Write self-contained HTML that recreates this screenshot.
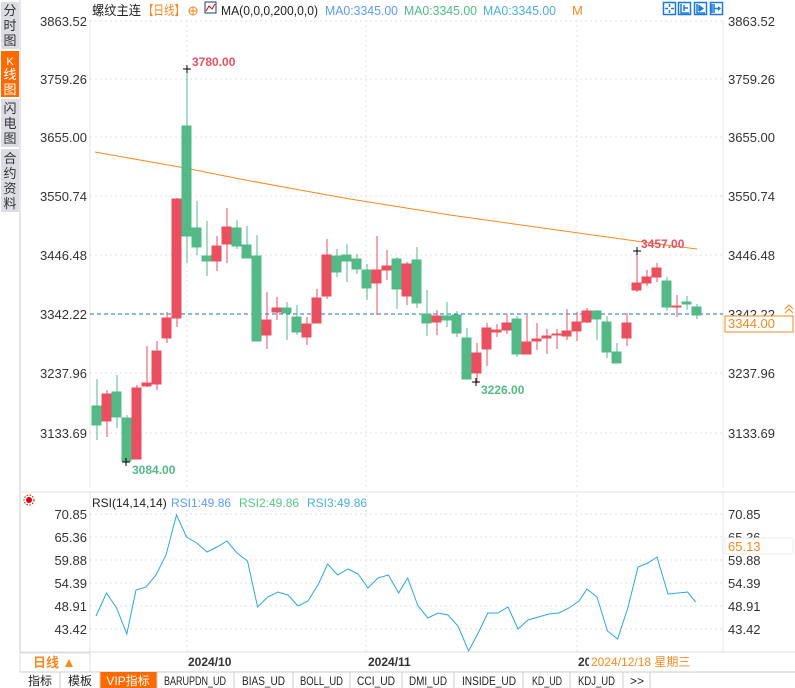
<!DOCTYPE html>
<html><head><meta charset="utf-8"><style>
body{margin:0;width:795px;height:688px;overflow:hidden;background:#fff;font-family:"Liberation Sans","Noto Sans CJK SC",sans-serif;}
svg{display:block}
text{font-family:"Liberation Sans","Noto Sans CJK SC",sans-serif;}
</style></head><body>
<svg width="795" height="688" viewBox="0 0 795 688" xmlns="http://www.w3.org/2000/svg">
<rect x="0" y="0" width="20" height="672" fill="#fff"/>
<rect x="1" y="2" width="18" height="47" fill="#dcdce4"/>
<rect x="1" y="51" width="18" height="46" fill="#ff6a00"/>
<rect x="1" y="99" width="18" height="48" fill="#dcdce4"/>
<rect x="1" y="149" width="18" height="63" fill="#dcdce4"/>
<g font-size="13" fill="#333" text-anchor="middle">
<text x="10" y="15">分</text><text x="10" y="30">时</text><text x="10" y="45">图</text>
<text x="10" y="65" fill="#fff" font-size="11">K</text><text x="10" y="79" fill="#fff">线</text><text x="10" y="94" fill="#fff">图</text>
<text x="10" y="113">闪</text><text x="10" y="128">电</text><text x="10" y="143">图</text>
<text x="10" y="163">合</text><text x="10" y="178">约</text><text x="10" y="193">资</text><text x="10" y="208">料</text>
</g>
<line x1="20" y1="0" x2="20" y2="672" stroke="#ccc"/>
<line x1="90" y1="20" x2="90" y2="488" stroke="#e4e4e4"/>
<line x1="723" y1="20" x2="723" y2="488" stroke="#e4e4e4"/>
<g stroke="#e2e2e2" stroke-dasharray="2,3">
<line x1="90" y1="21" x2="723" y2="21"/><line x1="90" y1="79" x2="723" y2="79"/><line x1="90" y1="137" x2="723" y2="137"/><line x1="90" y1="196" x2="723" y2="196"/><line x1="90" y1="255" x2="723" y2="255"/><line x1="90" y1="373" x2="723" y2="373"/><line x1="90" y1="433" x2="723" y2="433"/>
<line x1="187" y1="20" x2="187" y2="488"/><line x1="366" y1="20" x2="366" y2="488"/><line x1="577" y1="20" x2="577" y2="488"/>
<line x1="187" y1="495" x2="187" y2="652"/><line x1="366" y1="495" x2="366" y2="652"/><line x1="577" y1="495" x2="577" y2="652"/>
<line x1="90" y1="514" x2="723" y2="514"/><line x1="90" y1="537" x2="723" y2="537"/><line x1="90" y1="560" x2="723" y2="560"/><line x1="90" y1="583" x2="723" y2="583"/><line x1="90" y1="606" x2="723" y2="606"/><line x1="90" y1="629" x2="723" y2="629"/>
</g>
<line x1="90" y1="314" x2="723" y2="314" stroke="#1a6fd8" stroke-dasharray="4,3"/>
<g font-size="13" fill="#333">
<g text-anchor="end">
<text x="87" y="26">3863.52</text><text x="87" y="84">3759.26</text><text x="87" y="142">3655.00</text><text x="87" y="201">3550.74</text><text x="87" y="260">3446.48</text><text x="87" y="319">3342.22</text><text x="87" y="378">3237.96</text><text x="87" y="438">3133.69</text>
<text x="87" y="519">70.85</text><text x="87" y="542">65.36</text><text x="87" y="565">59.88</text><text x="87" y="588">54.39</text><text x="87" y="611">48.91</text><text x="87" y="634">43.42</text>
</g>
<text x="728" y="26">3863.52</text><text x="728" y="84">3759.26</text><text x="728" y="142">3655.00</text><text x="728" y="201">3550.74</text><text x="728" y="260">3446.48</text><text x="728" y="319">3342.22</text><text x="728" y="378">3237.96</text><text x="728" y="438">3133.69</text>
<text x="728" y="519">70.85</text><text x="728" y="542">65.36</text><text x="728" y="565">59.88</text><text x="728" y="588">54.39</text><text x="728" y="611">48.91</text><text x="728" y="634">43.42</text>
</g>
<rect x="725" y="316" width="68" height="16" fill="#fff" stroke="#f7891e"/>
<text x="728" y="328" font-size="13" fill="#f7891e">3344.00</text>
<path d="M785 313l4-4 4 4M785 309l4-4 4 4" stroke="#f7891e" fill="none"/>
<rect x="725" y="538" width="68" height="16" fill="#fff" stroke="#eee"/>
<text x="728" y="551" font-size="13" fill="#f7891e">65.13</text>
<text x="92" y="15" font-size="13" fill="#222" textLength="49" lengthAdjust="spacingAndGlyphs">螺纹主连</text>
<text x="143" y="15" font-size="13" fill="#f7891e" textLength="42" lengthAdjust="spacingAndGlyphs">【日线】</text>
<circle cx="193" cy="11" r="4" fill="none" stroke="#f7891e"/><path d="M189 11h8M193 7v8" stroke="#f7891e"/>
<rect x="205" y="2" width="11" height="11" fill="#fff" stroke="#1a3a8a"/><path d="M206 11l3-5 3 3 3-5" stroke="#d00" fill="none"/>
<text x="221" y="15" font-size="13" fill="#222" textLength="97" lengthAdjust="spacingAndGlyphs">MA(0,0,0,200,0,0)</text>
<text x="325" y="15" font-size="13" fill="#5b9cf2" textLength="73" lengthAdjust="spacingAndGlyphs">MA0:3345.00</text>
<text x="404" y="15" font-size="13" fill="#52b987" textLength="73" lengthAdjust="spacingAndGlyphs">MA0:3345.00</text>
<text x="483" y="15" font-size="13" fill="#4aaede" textLength="73" lengthAdjust="spacingAndGlyphs">MA0:3345.00</text>
<text x="572" y="15" font-size="13" fill="#f7891e">M</text>
<g stroke="#1a7ad8" fill="none" stroke-width="1.5">
<rect x="663.5" y="2.5" width="12" height="12"/><rect x="678.5" y="2.5" width="12" height="12"/><rect x="694.5" y="2.5" width="12" height="12"/><rect x="710.5" y="2.5" width="12" height="12"/>
<path d="M669.5 4v3M669.5 10v3M665 8.5h3M671 8.5h3"/>
<path d="M681 4v9h8M684 5v6M684 8h4"/>
<path d="M697 4v9h8M699 5v6"/>
<path d="M712 4v9M714 4v9M714 8.5h6"/>
</g>
<path d="M699 5l5 3.5-5 3.5z" fill="#1a7ad8"/><path d="M718 6l3 2.5-3 2.5z" fill="#1a7ad8"/>
<polyline points="95,152 140,160 185,168 240,179 300,190 350,199 400,207 450,215 500,222 550,229 600,236 650,243 697,249" fill="none" stroke="#f7891e" stroke-width="1"/>
<g stroke-width="1">
<g fill="#52b987" stroke="#52b987">
<line x1="97" y1="379" x2="97" y2="440"/><rect x="92" y="406" width="9" height="19"/>
<line x1="117" y1="375" x2="117" y2="428"/><rect x="112" y="392" width="9" height="25"/>
<line x1="127" y1="415" x2="127" y2="462"/><rect x="122" y="418" width="9" height="43"/>
<line x1="187" y1="69" x2="187" y2="263"/><rect x="182" y="126" width="9" height="110"/>
<line x1="197" y1="201" x2="197" y2="255"/><rect x="192" y="228" width="9" height="19"/>
<line x1="207" y1="221" x2="207" y2="276"/><rect x="202" y="256" width="9" height="5"/>
<line x1="237" y1="220" x2="237" y2="249"/><rect x="232" y="228" width="9" height="18"/>
<line x1="247" y1="226" x2="247" y2="258"/><rect x="242" y="245" width="9" height="13"/>
<line x1="257" y1="235" x2="257" y2="341"/><rect x="252" y="256" width="9" height="85"/>
<line x1="287" y1="302" x2="287" y2="340"/><rect x="282" y="308" width="9" height="5"/>
<line x1="297" y1="305" x2="297" y2="335"/><rect x="292" y="317" width="9" height="15"/>
<line x1="337" y1="249" x2="337" y2="277"/><rect x="332" y="256" width="9" height="16"/>
<line x1="347" y1="244" x2="347" y2="282"/><rect x="342" y="255" width="9" height="6"/>
<line x1="357" y1="254" x2="357" y2="274"/><rect x="352" y="259" width="9" height="10"/>
<line x1="367" y1="264" x2="367" y2="300"/><rect x="362" y="270" width="9" height="18"/>
<line x1="397" y1="257" x2="397" y2="309"/><rect x="392" y="259" width="9" height="30"/>
<line x1="417" y1="247" x2="417" y2="308"/><rect x="412" y="260" width="9" height="43"/>
<line x1="427" y1="290" x2="427" y2="336"/><rect x="422" y="314" width="9" height="9"/>
<line x1="447" y1="302" x2="447" y2="327"/><rect x="442" y="316" width="9" height="4"/>
<line x1="457" y1="311" x2="457" y2="337"/><rect x="452" y="315" width="9" height="18"/>
<line x1="467" y1="328" x2="467" y2="379"/><rect x="462" y="338" width="9" height="41"/>
<line x1="517" y1="316" x2="517" y2="357"/><rect x="512" y="319" width="9" height="35"/>
<line x1="597" y1="310" x2="597" y2="340"/><rect x="592" y="311" width="9" height="8"/>
<line x1="607" y1="316" x2="607" y2="358"/><rect x="602" y="322" width="9" height="30"/>
<line x1="617" y1="343" x2="617" y2="363"/><rect x="612" y="352" width="9" height="11"/>
<line x1="667" y1="277" x2="667" y2="311"/><rect x="662" y="281" width="9" height="26"/>
<line x1="687" y1="296" x2="687" y2="310"/><rect x="682" y="302" width="9" height="2"/>
<line x1="697" y1="304" x2="697" y2="319"/><rect x="692" y="307" width="9" height="8"/>
</g>
<g fill="#ea4f5f" stroke="#ea4f5f">
<line x1="107" y1="390" x2="107" y2="437"/><rect x="102" y="394" width="9" height="27"/>
<line x1="137" y1="385" x2="137" y2="459"/><rect x="132" y="388" width="9" height="71"/>
<line x1="147" y1="346" x2="147" y2="387"/><rect x="142" y="383" width="9" height="3"/>
<line x1="157" y1="341" x2="157" y2="390"/><rect x="152" y="351" width="9" height="33"/>
<line x1="167" y1="312" x2="167" y2="343"/><rect x="162" y="318" width="9" height="20"/>
<line x1="177" y1="198" x2="177" y2="327"/><rect x="172" y="199" width="9" height="119"/>
<line x1="217" y1="236" x2="217" y2="271"/><rect x="212" y="246" width="9" height="15"/>
<line x1="227" y1="208" x2="227" y2="263"/><rect x="222" y="227" width="9" height="17"/>
<line x1="267" y1="292" x2="267" y2="349"/><rect x="262" y="320" width="9" height="15"/>
<line x1="277" y1="297" x2="277" y2="320"/><rect x="272" y="308" width="9" height="4"/>
<line x1="307" y1="317" x2="307" y2="345"/><rect x="302" y="324" width="9" height="13"/>
<line x1="317" y1="289" x2="317" y2="323"/><rect x="312" y="298" width="9" height="25"/>
<line x1="327" y1="239" x2="327" y2="299"/><rect x="322" y="255" width="9" height="41"/>
<line x1="377" y1="236" x2="377" y2="315"/><rect x="372" y="270" width="9" height="13"/>
<line x1="387" y1="250" x2="387" y2="280"/><rect x="382" y="266" width="9" height="4"/>
<line x1="407" y1="262" x2="407" y2="305"/><rect x="402" y="264" width="9" height="32"/>
<line x1="437" y1="310" x2="437" y2="335"/><rect x="432" y="316" width="9" height="6"/>
<line x1="477" y1="343" x2="477" y2="383"/><rect x="472" y="353" width="9" height="20"/>
<line x1="487" y1="323" x2="487" y2="366"/><rect x="482" y="328" width="9" height="21"/>
<line x1="497" y1="324" x2="497" y2="337"/><rect x="492" y="330" width="9" height="2"/>
<line x1="507" y1="314" x2="507" y2="334"/><rect x="502" y="323" width="9" height="7"/>
<line x1="527" y1="315" x2="527" y2="354"/><rect x="522" y="342" width="9" height="12"/>
<line x1="537" y1="323" x2="537" y2="350"/><rect x="532" y="339" width="9" height="2"/>
<line x1="547" y1="329" x2="547" y2="354"/><rect x="542" y="336" width="9" height="2"/>
<line x1="557" y1="329" x2="557" y2="349"/><rect x="552" y="334" width="9" height="1"/>
<line x1="567" y1="309" x2="567" y2="340"/><rect x="562" y="331" width="9" height="5"/>
<line x1="577" y1="312" x2="577" y2="341"/><rect x="572" y="322" width="9" height="9"/>
<line x1="587" y1="308" x2="587" y2="323"/><rect x="582" y="311" width="9" height="11"/>
<line x1="627" y1="313" x2="627" y2="346"/><rect x="622" y="323" width="9" height="15"/>
<line x1="637" y1="251" x2="637" y2="292"/><rect x="632" y="283" width="9" height="7"/>
<line x1="647" y1="270" x2="647" y2="286"/><rect x="642" y="277" width="9" height="6"/>
<line x1="657" y1="263" x2="657" y2="282"/><rect x="652" y="268" width="9" height="9"/>
<line x1="677" y1="295" x2="677" y2="317"/><rect x="672" y="306" width="9" height="1"/>
</g>
</g>
<path d="M183 69h8M187 65v8M122 462h8M126 458v8M472 382h8M476 378v8M633 251h8M637 247v8" stroke="#000"/>
<text x="192" y="66" font-size="12" font-weight="bold" fill="#ea4f5f">3780.00</text>
<text x="132" y="474" font-size="12" font-weight="bold" fill="#52b987">3084.00</text>
<text x="481" y="394" font-size="12" font-weight="bold" fill="#52b987">3226.00</text>
<text x="641" y="248" font-size="12" font-weight="bold" fill="#ea4f5f">3457.00</text>
<line x1="20" y1="492" x2="795" y2="492" stroke="#e0e0e0"/>
<line x1="90" y1="492" x2="90" y2="652" stroke="#e4e4e4"/>
<line x1="723" y1="492" x2="723" y2="652" stroke="#e4e4e4"/>
<circle cx="29" cy="500" r="3" fill="#d00"/><circle cx="29" cy="500" r="5" fill="none" stroke="#d00" stroke-dasharray="1.5,1.5"/>
<text x="92" y="507" font-size="12" fill="#222">RSI(14,14,14)</text>
<text x="171" y="507" font-size="12" fill="#5b9cf2">RSI1:49.86</text>
<text x="239" y="507" font-size="12" fill="#52c987">RSI2:49.86</text>
<text x="307" y="507" font-size="12" fill="#4aaede">RSI3:49.86</text>
<polyline fill="none" stroke="#2aa8e0" stroke-width="1" points="96,616 106.5,593 116.6,608 126.8,634 136,590 146,587 156,575 166,555 176.5,515 186.6,537 196.8,543 207,552 217,547 227,541 237,553 247.5,561 257.6,607 267.7,597 278,592 288,595 298,606 308,601 318.5,584 327.6,564 337.7,575 348,569 358,574 368,588 378,578 388.4,575 398.6,593 407.7,578 418,606 428,618 438,613 448,615 458,626 468.6,651 478.7,632 487.8,613 498,613 508,607 518,629 528,620 538.5,617 548.7,614 558.8,613 569,608 579,601 587,589 597,597 607.5,631 617.6,639 627.8,608 638,567 648,563 657,557 668,594 678.5,593 687.6,592 695.7,602"/>
<line x1="20" y1="652" x2="795" y2="652" stroke="#ddd"/>
<rect x="20" y="653" width="70" height="19" fill="#fff" stroke="#ddd"/>
<text x="33" y="667" font-size="13" font-weight="bold" fill="#f7891e">日线</text>
<path d="M65 667l4-8 4 8z" fill="#f7891e"/>
<g font-size="12" font-weight="bold" fill="#333">
<text x="188" y="666">2024/10</text><text x="368" y="666">2024/11</text><text x="578" y="666">20</text>
</g>
<rect x="589" y="653" width="110" height="17" fill="#fff"/>
<text x="591" y="666" font-size="12" fill="#f7891e">2024/12/18 星期三</text>
<rect x="20" y="672" width="775" height="16" fill="#fff"/>
<line x1="20" y1="672" x2="795" y2="672" stroke="#ccc"/>
<rect x="100" y="672" width="57" height="16" fill="#ff6a00"/>
<g stroke="#ccc"><line x1="60" y1="672" x2="60" y2="688"/><line x1="100" y1="672" x2="100" y2="688"/><line x1="157" y1="672" x2="157" y2="688"/><line x1="234" y1="672" x2="234" y2="688"/><line x1="293" y1="672" x2="293" y2="688"/><line x1="350" y1="672" x2="350" y2="688"/><line x1="402" y1="672" x2="402" y2="688"/><line x1="454" y1="672" x2="454" y2="688"/><line x1="523" y1="672" x2="523" y2="688"/><line x1="570" y1="672" x2="570" y2="688"/><line x1="623" y1="672" x2="623" y2="688"/><line x1="650" y1="672" x2="650" y2="688"/></g>
<g font-size="12" fill="#222" text-anchor="middle">
<text x="40" y="685">指标</text><text x="80" y="685">模板</text><text x="128" y="685" fill="#fff">VIP指标</text>
</g>
<g font-size="12" fill="#222" style="font-family:'Liberation Mono',monospace" lengthAdjust="spacingAndGlyphs">
<text x="164" y="685" textLength="62" lengthAdjust="spacingAndGlyphs">BARUPDN_UD</text>
<text x="242" y="685" textLength="43" lengthAdjust="spacingAndGlyphs">BIAS_UD</text>
<text x="300" y="685" textLength="43" lengthAdjust="spacingAndGlyphs">BOLL_UD</text>
<text x="357" y="685" textLength="38" lengthAdjust="spacingAndGlyphs">CCI_UD</text>
<text x="409" y="685" textLength="38" lengthAdjust="spacingAndGlyphs">DMI_UD</text>
<text x="462" y="685" textLength="54" lengthAdjust="spacingAndGlyphs">INSIDE_UD</text>
<text x="532" y="685" textLength="30" lengthAdjust="spacingAndGlyphs">KD_UD</text>
<text x="578" y="685" textLength="37" lengthAdjust="spacingAndGlyphs">KDJ_UD</text>
<text x="630" y="685">&gt;&gt;</text>
</g>
</svg>
</body></html>
